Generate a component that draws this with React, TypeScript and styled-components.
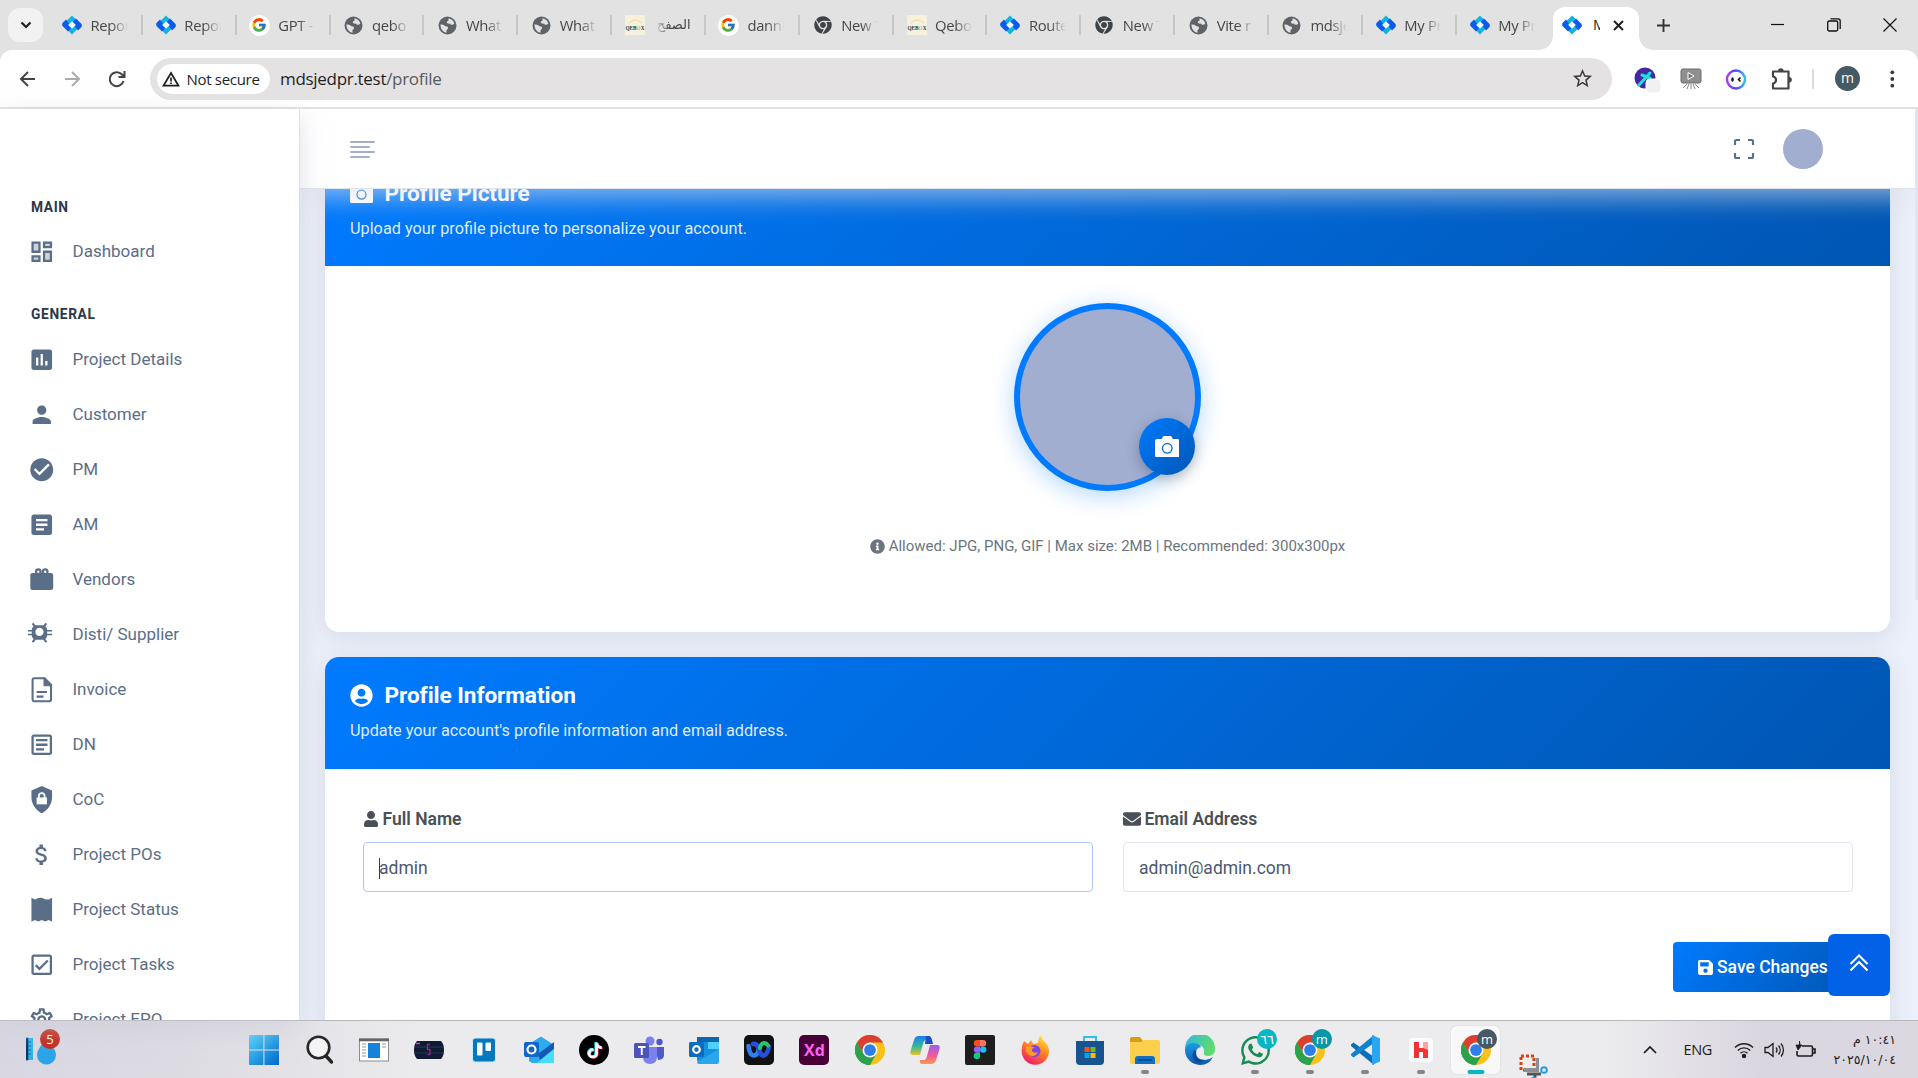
import React from "react";
import styled, { createGlobalStyle, css } from "styled-components";
import {
  MdPublic, MdAssessment, MdPerson, MdCheckCircle, MdArticle, MdOutlineArticle,
  MdAttachMoney, MdOutlineCheckBox, MdOutlineSettings, MdStarBorder,
} from "react-icons/md";
import { FaChrome, FaUserCircle, FaInfoCircle, FaUser, FaEnvelope, FaSave, FaTiktok, FaWhatsapp } from "react-icons/fa";
import { FcGoogle } from "react-icons/fc";

const Global = createGlobalStyle`
  *, *::before, *::after { box-sizing: border-box; }
  body { margin: 0; overflow: hidden; font-family: Roboto, "Liberation Sans", sans-serif; }
  svg { display: block; flex: none; }
  p, h2, h3 { margin: 0; }
`;

const uiFont = `"Open Sans", "Noto Sans", sans-serif`;

const Screen = styled.div`
  display: flex;
  flex-direction: column;
  width: 1918px;
  height: 1078px;
  overflow: hidden;
  background: #e2e2e2;
`;

/* ---------- browser chrome ---------- */

const TabStrip = styled.div`
  display: flex;
  align-items: center;
  height: 50px;
  flex: none;
  padding-left: 8px;
  background: #e2e2e2;
`;

const TabSearch = styled.div`
  display: grid;
  place-items: center;
  width: 35px;
  height: 34px;
  margin-right: 6px;
  border-radius: 12px;
  background: #f2f2f2;
`;

const TabItem = styled.div<{ $last?: boolean }>`
  display: flex;
  align-items: center;
  width: 93.85px;
  height: 20px;
  padding-left: 12px;
  gap: 7.5px;
  border-right: 2px solid ${(p) => (p.$last ? "transparent" : "#c6c6c6")};
`;

const Favicon = styled.div`
  display: grid;
  place-items: center;
  width: 22px;
  height: 22px;
  flex: none;
`;

const TabTitle = styled.div<{ $rtl?: boolean }>`
  width: 37px;
  overflow: hidden;
  white-space: nowrap;
  direction: ${(p) => (p.$rtl ? "rtl" : "ltr")};
  font: 14.8px/22px ${uiFont};
  ${(p) => p.$rtl && css`font-family: "DejaVu Sans", sans-serif; font-size: 13px;`}
  letter-spacing: -0.3px;
  color: #474747;
  mask-image: linear-gradient(to ${(p) => (p.$rtl ? "left" : "right")}, #000 55%, transparent 100%);
`;

const ActiveTab = styled.div`
  position: relative;
  display: flex;
  align-items: center;
  align-self: flex-end;
  width: 86px;
  height: 43px;
  margin-left: 2.5px;
  padding: 0 13px 7px 8px;
  border-radius: 12px 12px 0 0;
  background: #fff;
  &::before, &::after {
    content: "";
    position: absolute;
    bottom: 0;
    width: 14px;
    height: 14px;
  }
  &::before { left: -14px; background: radial-gradient(circle at 0 0, transparent 13.5px, #fff 14px); }
  &::after { right: -14px; background: radial-gradient(circle at 100% 0, transparent 13.5px, #fff 14px); }
`;

const ActiveTitle = styled.div`
  width: 7px;
  margin: 0 13px 0 10px;
  overflow: hidden;
  font: 14.5px/22px ${uiFont};
  color: #1f1f1f;
`;

const NewTab = styled.div`
  margin-left: 17px;
  flex: 1;
`;

const WindowButtons = styled.div`
  display: flex;
  width: 168.5px;
  flex: none;
  > svg { margin: 0 auto; }
`;

const Toolbar = styled.div`
  display: flex;
  align-items: center;
  height: 59px;
  flex: none;
  padding-left: 17px;
  border-radius: 12px 12px 0 0;
  border-bottom: 2px solid #e1e1e1;
  background: #fff;
`;

const NavButtons = styled.div`
  display: flex;
  gap: 22px;
  width: 133px;
`;

const Omnibox = styled.div`
  display: flex;
  align-items: center;
  width: 1462px;
  height: 42px;
  flex: none;
  padding: 0 18px 0 7px;
  border-radius: 21px;
  background: #e4e2e3;
`;

const SecurityChip = styled.div`
  display: flex;
  align-items: center;
  gap: 6.5px;
  width: 113px;
  height: 30px;
  padding-left: 5px;
  border-radius: 15px;
  background: #fff;
  font: 500 15px/20px ${uiFont};
  letter-spacing: -0.3px;
  color: #1f1f1f;
  white-space: nowrap;
`;

const Url = styled.div`
  flex: 1;
  margin-left: 10px;
  padding-top: 1px;
  font: 17px/24px ${uiFont};
  letter-spacing: -0.3px;
  color: #1f1f1f;
  span { color: #5a5a5a; }
`;

const Extensions = styled.div`
  display: flex;
  align-items: center;
  flex: 1;
  padding-left: 21px;
  gap: 21px;
`;

const ExtSlot = styled.div`
  display: grid;
  place-items: center;
  width: 24.5px;
`;

const ExtDivider = styled.div`
  width: 2px;
  height: 20px;
  margin: 0 0 0 -3px;
  background: #dcdcdc;
`;

const ProfileDot = styled.div`
  display: grid;
  place-items: center;
  width: 25px;
  height: 25px;
  border-radius: 50%;
  background: #455a64;
  color: #fff;
  font: 14px/20px ${uiFont};
  padding-bottom: 2px;
`;

/* ---------- application ---------- */

const Page = styled.div`
  display: flex;
  height: 911px;
  flex: none;
  background: #ecf0fa;
`;

const Sidebar = styled.aside`
  width: 300px;
  flex: none;
  overflow: hidden;
  padding-top: 87px;
  border-right: 1px solid #dfe1e8;
  background: #fff;
  box-shadow: 0 8px 24px rgba(200, 204, 215, 0.6);
  z-index: 2;
`;

const Section = styled.h3<{ $gap?: boolean }>`
  margin-top: ${(p) => (p.$gap ? "25px" : "0")};
  padding-left: 31px;
  font-size: 13.75px;
  font-weight: 700;
  line-height: 22px;
  letter-spacing: 0.65px;
  color: #2c364c;
`;

const NavItem = styled.a<{ $top?: number }>`
  display: flex;
  align-items: center;
  gap: 16.5px;
  height: 55px;
  margin-top: ${(p) => p.$top ?? 0}px;
  padding-left: 28px;
  font-size: 17px;
  color: #5b6e88;
  span { padding-top: 1px; }
`;

const NavIcon = styled.span`
  display: grid;
  place-items: center;
  width: 28px;
  height: 28px;
  color: #5b6e88;
`;

const Main = styled.main`
  position: relative;
  display: flex;
  flex-direction: column;
  width: 1615px;
  min-width: 0;
  overflow: hidden;
`;

const ScrollTrack = styled.div`
  width: 3px;
  height: 491px;
  background: #e1e6f3;
`;

const TopBar = styled.header`
  display: flex;
  align-items: center;
  justify-content: space-between;
  height: 80px;
  flex: none;
  padding: 0 92px 0 50px;
  border-bottom: 1px solid #dee4ec;
  background: #fff;
  box-shadow: 0 8px 24px rgba(222, 225, 232, 0.62);
  z-index: 1;
`;

const Burger = styled.div`
  display: flex;
  flex-direction: column;
  gap: 3px;
  padding-top: 2px;
  i { display: block; width: 25px; height: 2px; border-radius: 1px; background: #a5aecb; }
  i:nth-child(even) { width: 20px; }
`;

const TopActions = styled.div`
  display: flex;
  align-items: center;
  gap: 28px;
`;

const SmallAvatar = styled.div`
  width: 40px;
  height: 40px;
  border-radius: 50%;
  background: #a1aed0;
`;

const Content = styled.div`
  display: flex;
  flex-direction: column;
  gap: 25px;
  margin-top: -35px;
  padding: 0 25px;
`;

const Card = styled.section<{ $h: number }>`
  height: ${(p) => p.$h}px;
  flex: none;
  overflow: hidden;
  border-radius: 14px;
  background: #fff;
  box-shadow: 0 5px 25px rgba(60, 70, 110, 0.12);
`;

const CardHead = styled.div<{ $top?: number }>`
  height: 112px;
  padding: ${(p) => p.$top ?? 25}px 25px 0;
  background: linear-gradient(135deg, #007bff 0%, #0056b3 100%);
  color: #fff;
`;

const CardTitle = styled.h2`
  display: flex;
  align-items: center;
  gap: 11.5px;
  height: 26px;
  font-size: 22.6px;
  font-weight: 700;
  letter-spacing: -0.05px;
`;

const CardSub = styled.p`
  margin-top: 11px;
  font-size: 16.25px;
  line-height: 24px;
  color: rgba(255, 255, 255, 0.88);
`;

const PictureBody = styled.div`
  display: flex;
  flex-direction: column;
  align-items: center;
  padding-top: 37px;
`;

const Portrait = styled.div`
  position: relative;
  width: 187px;
  height: 188px;
  border: 6px solid #007bff;
  border-radius: 50%;
  background: #a1aed0;
  box-shadow: 0 5px 25px rgba(0, 123, 255, 0.3);
`;

const CameraButton = styled.div`
  position: absolute;
  right: 0;
  bottom: 10px;
  display: grid;
  place-items: center;
  width: 56px;
  height: 57px;
  border-radius: 50%;
  background: linear-gradient(135deg, #007bff, #0056b3);
  box-shadow: 0 4px 14px rgba(0, 0, 0, 0.25);
  color: #fff;
`;

const Hint = styled.p`
  display: flex;
  align-items: center;
  gap: 4px;
  margin-top: 43px;
  font-size: 15px;
  line-height: 24px;
  color: #6c757d;
`;

const Fields = styled.div`
  display: grid;
  grid-template-columns: 1fr 1fr;
  gap: 30px;
  padding: 35px 37px 0 38px;
`;

const Label = styled.div`
  display: flex;
  align-items: center;
  gap: 3.5px;
  height: 29px;
  margin-bottom: 9px;
  padding-top: 1px;
  font-size: 17.5px;
  font-weight: 600;
  color: #495057;
  svg { margin-bottom: 1px; }
`;

const Input = styled.div<{ $focus?: boolean }>`
  display: flex;
  align-items: center;
  height: 50px;
  padding: 2px 0 0 15px;
  border: 1px solid ${(p) => (p.$focus ? "#b3c6f9" : "#e1e5f1")};
  border-radius: 4px;
  font-size: 17.5px;
  color: #4d5875;
`;

const Caret = styled.i`
  width: 1px;
  height: 21px;
  margin-right: -1px;
  background: #333b55;
`;

const FormFoot = styled.div`
  display: flex;
  justify-content: flex-end;
  padding: 50px 37px 0 0;
`;

const SaveButton = styled.div`
  display: flex;
  align-items: center;
  gap: 3px;
  width: 180px;
  height: 50px;
  padding-left: 24px;
  border-radius: 4px;
  background: linear-gradient(135deg, #007bff, #0056b3);
  color: #fff;
  font-size: 17.5px;
  font-weight: 500;
  white-space: nowrap;
`;

const BackToTop = styled.div`
  position: absolute;
  right: 25px;
  bottom: 24px;
  display: grid;
  place-items: center;
  width: 62px;
  height: 62px;
  padding-bottom: 4px;
  border-radius: 6px;
  background: #0162e8;
`;

/* ---------- taskbar ---------- */

const Taskbar = styled.div`
  display: flex;
  height: 58px;
  flex: none;
  border-top: 1px solid #b8b8bb;
  background: linear-gradient(90deg, #d9d7e1 0, #dddbe2 180px, #ebebed 420px, #ececee 1600px, #dad6e0 1760px, #dcd8e0 100%);
`;

const Weather = styled.div`
  position: relative;
  width: 236px;
  padding: 8px 0 0 26px;
`;

const Badge = styled.div<{ $x: number; $y: number; $s: number; $bg: string }>`
  position: absolute;
  left: ${(p) => p.$x}px;
  top: ${(p) => p.$y}px;
  display: grid;
  place-items: center;
  width: ${(p) => p.$s}px;
  height: ${(p) => p.$s}px;
  border-radius: 50%;
  background: ${(p) => p.$bg};
  color: #fff;
  font: 13px/16px ${uiFont};
`;

const AppSlot = styled.div<{ $active?: boolean; $running?: boolean; $drop?: boolean }>`
  position: relative;
  display: grid;
  place-items: center;
  width: 49px;
  height: 48px;
  margin: 5px 3.05px 0;
  padding-top: ${(p) => (p.$drop ? "27px" : "0")};
  padding-left: ${(p) => (p.$drop ? "6px" : "0")};
  border-radius: 5px;
  ${(p) => p.$active && css`background: #f8f8f9; box-shadow: 0 0 1px rgba(0, 0, 0, 0.25);`}
  &::after {
    content: "";
    position: absolute;
    bottom: 0;
    left: 50%;
    width: ${(p) => (p.$active ? 17 : 8)}px;
    height: 4px;
    transform: translateX(-50%);
    border-radius: 2px;
    background: ${(p) => (p.$active ? "#06b6c4" : p.$running ? "#858585" : "transparent")};
  }
`;

const Tile = styled.div<{ $bg: string; $fg?: string; $r?: number }>`
  display: grid;
  place-items: center;
  width: 30px;
  height: 30px;
  border-radius: ${(p) => p.$r ?? 5}px;
  background: ${(p) => p.$bg};
  color: ${(p) => p.$fg ?? "#fff"};
  font: 700 16px/20px "Open Sans", sans-serif;
`;

const Tray = styled.div`
  display: flex;
  align-items: center;
  flex: 1;
  padding-right: 22px;
  justify-content: flex-end;
  color: #1c1c1c;
`;

const Lang = styled.div`
  margin: 0 22px 0 26px;
  padding-top: 1px;
  font: 14.5px/20px ${uiFont};
  letter-spacing: -0.3px;
`;

const TrayIcons = styled.div`
  display: flex;
  gap: 10px;
  margin-right: 18px;
`;

const Clock = styled.div`
  direction: rtl;
  width: 62px;
  font: 12.6px/20px "DejaVu Sans", sans-serif;
  letter-spacing: -1px;
  white-space: nowrap;
`;

/* ---------- drawings ---------- */

const Camera = ({ size }: { size: number }) => (
  <svg width={size} height={size * 0.88} viewBox="0 0 24 21">
    <path fill="currentColor" d="M2 3h4.500l1-2q.5-1 1.500-1h6q1 0 1.500 1l1 2H22q2 0 2 2v14q0 2-2 2H2q-2 0-2-2V5q0-2 2-2z" />
    <circle cx="12" cy="12" r="4.700" fill="none" stroke="#0a72e6" strokeWidth="1.400" />
  </svg>
);

const Diamond = () => (
  <svg width="20" height="20" viewBox="0 0 20 20">
    <path d="M10 0.5 L19.5 10 L10 19.5 L0.5 10Z" fill="#10b4e0" />
    <path d="M10 6.5 L14 2.5 L19.5 8 Q20.2 10 19.5 11 L16 14.5Z" fill="#0a5cf0" transform="translate(0 1)" />
    <path d="M10 13.5 L6 17.5 L0.5 12 Q-.2 10 .5 9 L4 5.5Z" fill="#0a5cf0" transform="translate(0 -1)" />
    <path d="M10 6.2 L13.8 10 L10 13.8 L6.2 10Z" fill="#f5f8fb" />
  </svg>
);

const Qebox = () => (
  <svg width="20" height="20" viewBox="0 0 20 20">
    <rect width="20" height="20" fill="#f6f1dc" />
    <path d="M4 8 Q10 2 17 8" stroke="#f3d59b" fill="none" />
    <text x="0.5" y="14.5" fontSize="7" fontWeight="700" textLength="19" lengthAdjust="spacingAndGlyphs" fontFamily="Liberation Serif, serif" fill="#17423d">QEB<tspan fill="#e0aa4f">O</tspan>X</text>
  </svg>
);

const GoogleIcon = () => (
  <svg width="21" height="21" viewBox="0 0 21 21">
    <circle cx="10.5" cy="10.5" r="10.5" fill="#fff" />
    <FcGoogle x="2" y="2" width="17" height="17" />
  </svg>
);

/* Dark globe disc with light land masses */
const Globe = () => (
  <svg width="19" height="19" viewBox="0 0 19 19">
    <circle cx="9.500" cy="9.500" r="9" fill="#5f6368" />
    <path d="M2.300 8.500q2.700-.3 4.200 1 .8 1 2.500 1 1.500.4 1 2-.8 1.200-1.500 1.500v2.700Q3 16 2.300 8.500z" fill="#e2e2e2" />
    <path d="M10.500 2.200q4.500.8 5.800 5.300-.8 1.500-2.300 1-1.500.7-1.800-1-2.700.5-3.500-1 .2-1.500 1.800-1.800z" fill="#e2e2e2" />
  </svg>
);

const ChromeLogo = () => (
  <svg width="30" height="30" viewBox="0 0 48 48">
    <circle cx="24" cy="24" r="24" fill="#fbc116" />
    <path d="M24 24 L3.2 12 A24 24 0 0 1 44.8 12 L24 12Z" fill="#dc3e30" />
    <path d="M3.2 12 A24 24 0 0 0 24 48 L34.4 30 L24 24 L13.6 30Z" fill="#2ba24c" />
    <path d="M3.2 12 L13.6 30 L24 24 L24 12Z" fill="#dc3e30" />
    <path d="M3.2 12 L13.6 30 L20 33 L24 48 A24 24 0 0 1 3.2 12Z" fill="#2ba24c" />
    <circle cx="24" cy="24" r="12" fill="#fff" />
    <circle cx="24" cy="24" r="9.4" fill="#2f7de9" />
  </svg>
);

const PuzzleIcon = () => (
  <svg width="24" height="26" viewBox="0 0 24 26">
    <path d="M3 5.500h15.500v17H3v-5q3-.5 3-3.500t-3-3.500z" fill="none" stroke="#444" strokeWidth="2.200" strokeLinejoin="round" />
    <path d="M8 5a2.800 2.800 0 0 1 5.600 0zM19 11a2.800 2.800 0 0 1 0 5.600z" fill="#444" />
  </svg>
);

const faviconFor: Record<string, React.ReactNode> = {
  diamond: <Diamond />,
  google: <GoogleIcon />,
  globe: <Globe />,
  chrome: <FaChrome size={18} color="#3f4347" />,
  qebox: <Qebox />,
};

const tabs: [string, string][] = [
  ["diamond", "Repor"], ["diamond", "Repor"], ["google", "GPT -"], ["globe", "qebo"], ["globe", "What"],
  ["globe", "What"], ["qebox", "الصفح"], ["google", "danni"], ["chrome", "New T"], ["qebox", "Qebo"],
  ["diamond", "Route"], ["chrome", "New T"], ["globe", "Vite r"], ["globe", "mdsje"], ["diamond", "My Pr"], ["diamond", "My Pr"],
];

const DashboardIcon = () => (
  <svg width="27.5" height="27.5" viewBox="0 0 24 24" fill="#cdd4dc" stroke="currentColor" strokeWidth="2">
    <path d="M4 4h6v8H4zM14 4h6v4h-6zM14 12h6v8h-6zM4 16h6v4H4z" />
  </svg>
);
const GiftIcon = () => (
  <svg width="27.5" height="27.5" viewBox="0 0 24 24" fill="currentColor">
    <path d="M4 6h16q2 0 2 2v11q0 2-2 2H4q-2 0-2-2V8q0-2 2-2z" />
    <circle cx="9" cy="5" r="2" fill="none" stroke="currentColor" strokeWidth="1.9" />
    <circle cx="15" cy="5" r="2" fill="none" stroke="currentColor" strokeWidth="1.9" />
  </svg>
);
const SupplierIcon = () => (
  <svg width="27.5" height="27.5" viewBox="0 0 24 24" fill="none" stroke="currentColor">
    <path d="M-1 8.500h22M-1 11.700h22" strokeWidth="1.300" />
    <path d="M4 2l3 4M16 2l-3 4M4 18.500l3-4M16 18.500l-3-4" strokeWidth="1.800" />
    <rect x="3.300" y="3.800" width="13.400" height="12.600" rx="4" fill="currentColor" stroke="none" />
    <circle cx="10" cy="9.500" r="3.600" fill="#fff" stroke="none" />
  </svg>
);
const InvoiceIcon = () => (
  <svg width="27.5" height="27.5" viewBox="0 0 24 24" fill="none" stroke="currentColor" strokeWidth="1.800">
    <path d="M5.500 1.900h9l5.600 5.600v13a1.500 1.500 0 0 1-1.500 1.500H5.500A1.500 1.500 0 0 1 4 20.500V3.400A1.500 1.500 0 0 1 5.500 1.900z" />
    <path d="M14 2v6.500h6z" fill="currentColor" strokeWidth="1" />
    <path d="M7.500 14h9M7.500 18h6" />
  </svg>
);
const ShieldIcon = () => (
  <svg width="27.5" height="27.5" viewBox="0 0 24 24">
    <path fill="currentColor" d="M12 0 21 4v6c0 5.600-3.800 11-9 14-5.200-3-9-8.400-9-14V4z" />
    <path fill="#fff" d="M7.500 10h9v6h-9z" />
    <path fill="none" stroke="#fff" strokeWidth="1.500" d="M9.500 10.500V8.700a2.500 2.500 0 0 1 5 0v1.800" />
  </svg>
);
const ReceiptIcon = () => (
  <svg width="27.5" height="27.5" viewBox="0 0 24 24" fill="currentColor">
    <path d="M3 1.500 6 3l3-1.300L12 1.500l3 1.300L18 3l3-1.500v21L18 21l-3 1.300L12 21l-3 1.300L6 21l-3 1.500z" />
  </svg>
);

const nav: [React.ReactNode, string][] = [
  [<MdAssessment size={27.5} />, "Project Details"],
  [<MdPerson size={27.5} />, "Customer"],
  [<MdCheckCircle size={27.5} />, "PM"],
  [<MdArticle size={27.5} />, "AM"],
  [<GiftIcon />, "Vendors"],
  [<SupplierIcon />, "Disti/ Supplier"],
  [<InvoiceIcon />, "Invoice"],
  [<MdOutlineArticle size={27.5} />, "DN"],
  [<ShieldIcon />, "CoC"],
  [<MdAttachMoney size={27.5} />, "Project POs"],
  [<ReceiptIcon />, "Project Status"],
  [<MdOutlineCheckBox size={27.5} />, "Project Tasks"],
  [<MdOutlineSettings size={27.5} />, "Project EPO"],
];

const S = ({ children }: { children: React.ReactNode }) => (
  <svg width="30" height="30" viewBox="0 0 30 30">{children}</svg>
);

const WindowsLogo = () => (
  <S>
    <defs><linearGradient id="win" x1="0" y1="0" x2="1" y2="1"><stop offset="0" stopColor="#4fd2fb" /><stop offset="1" stopColor="#0069c9" /></linearGradient></defs>
    <path fill="url(#win)" d="M0 0h14.400v14.400H0zM15.400 0H30v14.400H15.400zM0 15.400h14.400V30H0zM15.400 15.400H30V30H15.400z" />
  </S>
);
const SearchLogo = () => (
  <S><circle cx="14.500" cy="12.500" r="10.800" fill="#f4f4f5" stroke="#262626" strokeWidth="2.600" /><path d="M22 21l5.500 6" stroke="#262626" strokeWidth="3.400" strokeLinecap="round" /></S>
);
const DocWindow = () => (
  <S>
    <rect x=".5" y="4" width="29" height="22" fill="#fff" stroke="#8b8b8b" /><rect x="0" y="3.500" width="30" height="2.800" fill="#666" />
    <rect x="9" y="8" width="12" height="15" fill="#1681d8" />
    <path d="M3 9h4M3 12h4M3 15h4M3 18h4M3 21h4M23 9h4M23 12h4" stroke="#999" />
  </S>
);
const DarkGame = () => (
  <S><path d="M3 6h24q3 3 3 9t-3 9H3q-3-3-3-9t3-9z" fill="#101a33" /><path d="M1 12h28M1 18h28" stroke="#1d3f58" /><path d="M16 9.500h-2.500v5H16v5h-2.500" stroke="#8e2b80" fill="none" strokeWidth="1.300" /><path d="M2 8.500h4" stroke="#d04a9b" strokeWidth="1.500" /></S>
);
const Trello = () => (
  <S><rect x="3.500" y="3" width="23" height="24" rx="3" fill="#0479c2" stroke="#c8ebfb" /><rect x="8" y="7.500" width="5.500" height="13" rx="1" fill="#fff" /><rect x="16.500" y="7.500" width="5.500" height="8.500" rx="1" fill="#fff" /></S>
);
const OutlookNew = () => (
  <S>
    <path d="M5 9 17 1.500 30 10v16q0 2-2 2H9q-2 0-4-2z" fill="#2babf0" /><path d="M14 19 30 7v7L16 25z" fill="#1459b5" /><path d="M13 28 30 14v12q0 2-2 2z" fill="#4bdcfb" />
    <rect x="0" y="7" width="15" height="15" rx="2" fill="#1065cc" /><circle cx="7.500" cy="14.500" r="4" fill="none" stroke="#fff" strokeWidth="2.200" />
  </S>
);
const TikTok = () => (
  <S><circle cx="15" cy="15" r="15" fill="#000" /><FaTiktok x="7" y="7" width="15" height="16" color="#25f4ee" /><FaTiktok x="8.500" y="8" width="15" height="16" color="#fe2c55" /><FaTiktok x="7.800" y="7.500" width="15" height="16" color="#fff" /></S>
);
const Teams = () => (
  <S>
    <circle cx="25.500" cy="7" r="3.200" fill="#5059c9" /><path d="M21 12h9v9q-1 4-6 4z" fill="#5059c9" /><circle cx="16" cy="6" r="4.500" fill="#7b83eb" /><path d="M9 12h14v10q0 7-7 7t-7-7z" fill="#7b83eb" />
    <rect x="0" y="8" width="15" height="15" rx="1.500" fill="#4b53bc" /><path d="M4 12h7.500M7.750 12v8" stroke="#fff" strokeWidth="1.900" />
  </S>
);
const Outlook = () => (
  <S>
    <rect x="8" y="2" width="22" height="25" rx="2" fill="#1490df" /><path d="M8 2h22v5H8z" fill="#0f65b0" /><path d="M19 7h11v7H19z" fill="#50d0ff" /><path d="M8 27l22-13v13q0 2-2 2H10q-2 0-2-2z" fill="#28a8ea" />
    <rect x="0" y="7" width="15" height="15" rx="1.500" fill="#0f6cbd" /><circle cx="7.500" cy="14.500" r="3.300" fill="none" stroke="#fff" strokeWidth="2.200" />
  </S>
);
const Webex = () => (
  <S>
    <rect width="30" height="30" rx="5" fill="#121212" />
    <path d="M4.500 11q1 9.500 5.500 9.500 3.500 0 5-7" fill="none" stroke="#2c7ff5" strokeWidth="4.500" strokeLinecap="round" />
    <path d="M9 9q4-1 6 5.500 2 7 5 6 4-2 5-9" fill="none" stroke="#2450dd" strokeWidth="4.500" strokeLinecap="round" />
    <path d="M16 13q1-5 4-5 2.500 0 4 2.500" fill="none" stroke="#27c46b" strokeWidth="4" strokeLinecap="round" />
  </S>
);
const Copilot = () => (
  <S>
    <defs>
      <linearGradient id="cpa" x1="0" y1="0" x2="0" y2="1"><stop offset="0" stopColor="#1a7ff0" /><stop offset=".55" stopColor="#37b89a" /><stop offset="1" stopColor="#e9c32c" /></linearGradient>
      <linearGradient id="cpb" x1="0" y1="0" x2="0" y2="1"><stop offset="0" stopColor="#a05af0" /><stop offset=".55" stopColor="#ee5a9a" /><stop offset="1" stopColor="#fb9a4b" /></linearGradient>
    </defs>
    <path d="M9 1h9q3 0 2 4h-4q-2 0-3 4l-3 11H3q-3.500 0-2.500-4L4 5q1-4 5-4z" fill="url(#cpa)" /><path d="M16 1h3q2 0 3 4l1 4h-8z" fill="#1d4fc8" />
    <path d="M21 29h-9q-3 0-2-4h4q2 0 3-4l3-11h7q3.500 0 2.500 4L26 25q-1 4-5 4z" fill="url(#cpb)" />
  </S>
);
const Figma = () => (
  <S>
    <rect width="30" height="30" rx="2" fill="#1e1e1e" /><path d="M15 5h-3a3.200 3.200 0 0 0 0 6.400h3z" fill="#f24e1e" /><path d="M15 5h3a3.200 3.200 0 0 1 0 6.400h-3z" fill="#ff7262" /><path d="M15 11.400h-3a3.200 3.200 0 0 0 0 6.400h3z" fill="#a259ff" /><circle cx="18.200" cy="14.600" r="3.200" fill="#1abcfe" /><path d="M15 17.800h-3a3.200 3.200 0 1 0 3 3.200z" fill="#0acf83" />
  </S>
);
const Firefox = () => (
  <S>
    <defs><linearGradient id="ff" x1=".8" y1="0" x2=".3" y2="1"><stop offset="0" stopColor="#fff04a" /><stop offset=".45" stopColor="#ff8a20" /><stop offset="1" stopColor="#f2186a" /></linearGradient></defs>
    <path d="M4 6l4 3 3-4 2 4 5-1q0-5 3-8 1 5 4 7 4 4 4 9a13.700 13.700 0 0 1-27.400 0q0-6 2.400-10z" fill="url(#ff)" /><circle cx="14.500" cy="16" r="6" fill="#7b46e4" /><path d="M6 12q5-2 9 1-4 0-3 3 2 3 6 1-3 6-9 3-4-3-3-8z" fill="#ff9a22" />
  </S>
);
const Store = () => (
  <S>
    <path d="M9 6V2h12v4" fill="none" stroke="#35bdf2" strokeWidth="2" /><path d="M1 6h28v20q0 4-4 4H5q-4 0-4-4z" fill="#17538f" /><path d="M9.500 12h5v5h-5z" fill="#f25022" /><path d="M15.500 12h5v5h-5z" fill="#7fba00" /><path d="M9.500 18h5v5h-5z" fill="#00a4ef" /><path d="M15.500 18h5v5h-5z" fill="#ffb900" />
  </S>
);
const Folder = () => (
  <S>
    <path d="M0 4q0-2 2-2h8l3 4h15v6H0z" fill="#dc9c10" /><path d="M0 7h11l3-2h14q2 0 2 2v20q0 2-2 2H2q-2 0-2-2z" fill="#fccf4c" /><path d="M5 29v-5q0-3 3-3h14q3 0 3 3v5z" fill="#1170c4" /><path d="M8 25h14" stroke="#0a4a8a" strokeWidth="1.500" />
  </S>
);
const Edge = () => (
  <S>
    <defs>
      <linearGradient id="eg1" x1="0" y1="0" x2="1" y2=".3"><stop offset="0" stopColor="#2fb4ea" /><stop offset="1" stopColor="#5ddc6c" /></linearGradient>
      <linearGradient id="eg2" x1="0" y1="0" x2="0" y2="1"><stop offset="0" stopColor="#1c9de4" /><stop offset="1" stopColor="#0c58ad" /></linearGradient>
    </defs>
    <path d="M0 13A15 15 0 0 1 30 14q0 6-6 7-6 0-5-3 1-8-7-8Q4 10 0 17z" fill="url(#eg1)" /><path d="M0 15q1-7 8-7 6 0 8 4-5 1-5 6 0 7 9 7 4 0 8-3-4 8-13 8A15 15 0 0 1 0 15z" fill="url(#eg2)" /><path d="M11 16q-1 9 8 9-4 4-8 2-6-4-2-12z" fill="#0b4b99" />
  </S>
);
const VsCode = () => (
  <S>
    <path d="M1 9.500 3.500 7.500 24 22v8L1 11z" fill="#0a6fb8" /><path d="M1 20.500 3.500 22.500 24 8V0L1 19z" fill="#1180cf" /><path d="M22 0 30 3.500v23L22 30z" fill="#2aa7f2" />
  </S>
);
const Herd = () => (
  <S><rect x="3" y="3" width="24" height="24" rx="4" fill="#fbfbfb" /><path d="M8 7h5v6h4V7h5v16h-5v-6h-4v6H8z" fill="#f23333" /><path d="M17 7h5v8l-5-2z" fill="#f9a5a5" /></S>
);
const Snip = () => (
  <S><rect x="2" y="3" width="13" height="14" fill="#eee" stroke="#d8420f" strokeWidth="3" strokeDasharray="3 2" /><path d="M5 15h12V5h3v14H5z" fill="#8c8f94" /><path d="M8 21h14M16 20v4" stroke="#555" strokeWidth="3" /><circle cx="25" cy="17" r="2.800" fill="none" stroke="#1f9ce4" strokeWidth="1.900" /><circle cx="15" cy="27" r="2.400" fill="none" stroke="#1f9ce4" strokeWidth="1.900" /></S>
);

type AppDef = { icon: React.ReactNode; running?: boolean; active?: boolean; drop?: boolean; badge?: [string, string] };
const apps: AppDef[] = [
  { icon: <WindowsLogo /> }, { icon: <SearchLogo /> }, { icon: <DocWindow /> }, { icon: <DarkGame /> }, { icon: <Trello /> },
  { icon: <OutlookNew /> }, { icon: <TikTok /> }, { icon: <Teams /> }, { icon: <Outlook /> }, { icon: <Webex /> },
  { icon: <Tile $bg="#470137" $fg="#ff61f6">Xd</Tile> }, { icon: <ChromeLogo /> }, { icon: <Copilot /> }, { icon: <Figma /> },
  { icon: <Firefox /> }, { icon: <Store /> }, { icon: <Folder />, running: true }, { icon: <Edge /> },
  { icon: <FaWhatsapp size={33} color="#1a8a55" />, running: true, badge: ["٦٦", "#06b6c4"] },
  { icon: <ChromeLogo />, running: true, badge: ["m", "#0797a7"] },
  { icon: <VsCode />, running: true }, { icon: <Herd />, running: true },
  { icon: <ChromeLogo />, active: true, badge: ["m", "#455a64"] },
  { icon: <Snip />, drop: true },
];

const line = { fill: "none", stroke: "#444", strokeWidth: 2 } as const;

export default function App() {
  return (
    <Screen>
      <Global />
      <TabStrip>
        <TabSearch>
          <svg width="12" height="8" viewBox="0 0 12 8"><path d="M1.500 1.500 6 6l4.500-4.500" fill="none" stroke="#1f1f1f" strokeWidth="2.200" /></svg>
        </TabSearch>
        {tabs.map(([icon, title], i) => (
          <TabItem key={i} $last={i === tabs.length - 1}>
            <Favicon>{faviconFor[icon]}</Favicon>
            <TabTitle $rtl={title.startsWith("ا")}>{title}</TabTitle>
          </TabItem>
        ))}
        <ActiveTab>
          <Favicon><Diamond /></Favicon>
          <ActiveTitle>M</ActiveTitle>
          <svg width="11" height="11" viewBox="0 0 11 11"><path d="M1 1l9 9M10 1l-9 9" stroke="#1f1f1f" strokeWidth="2" /></svg>
        </ActiveTab>
        <NewTab><svg width="15" height="15" viewBox="0 0 15 15"><path d="M7.500 1v13M1 7.500h13" stroke="#333" strokeWidth="1.900" /></svg></NewTab>
        <WindowButtons>
          <svg width="14" height="14" viewBox="0 0 14 14"><path d="M0 6.500h13" stroke="#111" strokeWidth="1.200" /></svg>
          <svg width="14" height="14" viewBox="0 0 14 14" fill="none" stroke="#111" strokeWidth="1.300"><rect x=".7" y="3" width="10" height="10" rx="1.500" /><path d="M3.500 .8h7.500q2.200 0 2.200 2.200v8" /></svg>
          <svg width="14" height="14" viewBox="0 0 14 14"><path d="M.5 .5l13 13M13.500 .5l-13 13" stroke="#111" strokeWidth="1.200" /></svg>
        </WindowButtons>
      </TabStrip>

      <Toolbar>
        <NavButtons>
          <svg width="22" height="22" viewBox="0 0 22 22" {...line}><path d="M18 11H4M11 4l-7 7 7 7" /></svg>
          <svg width="22" height="22" viewBox="0 0 22 22" {...line} stroke="#ababab"><path d="M4 11h14M11 4l7 7-7 7" /></svg>
          <svg width="24" height="22" viewBox="0 0 24 22" {...line}><path d="M18.500 13a7 7 0 1 1-1.500-6.500l2 2M19.500 3v6h-6" /></svg>
        </NavButtons>
        <Omnibox>
          <SecurityChip>
            <svg width="18" height="16" viewBox="0 0 18 16" fill="none" stroke="#1f1f1f" strokeWidth="1.700"><path d="M9 2 16.500 14.700H1.500zM9 6.500v4M9 11.500v1.600" /></svg>
            Not secure
          </SecurityChip>
          <Url>mdsjedpr.test<span>/profile</span></Url>
          <MdStarBorder size={23} color="#3c3c3c" />
        </Omnibox>
        <Extensions>
          <ExtSlot>
            <svg width="28" height="28" viewBox="0 0 28 28"><circle cx="12" cy="13" r="10.500" fill="#4527a5" /><path d="M6 20 17 8M9 10l8 3" stroke="#1fe0d8" strokeWidth="3" strokeLinecap="round" /><rect x="13" y="14" width="15" height="14" rx="4" fill="#f1f1f1" stroke="#fff" /></svg>
          </ExtSlot>
          <ExtSlot>
            <svg width="22" height="22" viewBox="0 0 22 22"><rect x="1" y="1" width="20" height="14" rx="2" fill="#8f8f8f" stroke="#6d6d6d" /><path d="M8 4.500l6 3.500-6 3.500z" fill="#777" stroke="#fff" /><path d="M11 16v5M7 16l-4 4M15 16l4 4M9 16l-2 5M13 16l2 5" stroke="#888" /></svg>
          </ExtSlot>
          <ExtSlot>
            <svg width="22" height="22" viewBox="0 0 22 22"><defs><linearGradient id="face"><stop offset="0" stopColor="#a63df2" /><stop offset=".5" stopColor="#4b4bf5" /><stop offset="1" stopColor="#35b8f0" /></linearGradient></defs><circle cx="11" cy="11.500" r="9" fill="#fff" stroke="url(#face)" strokeWidth="2.400" /><ellipse cx="7.500" cy="11.500" rx="1.300" ry="2.300" fill="#111" /><path d="M15.500 9.500 13.500 11.500l2 2" stroke="#111" strokeWidth="1.600" fill="none" /></svg>
          </ExtSlot>
          <ExtSlot><PuzzleIcon /></ExtSlot>
          <ExtDivider />
          <ProfileDot>m</ProfileDot>
          <svg width="28" height="20" viewBox="0 0 28 20" fill="#3c3c3c"><circle cx="11.300" cy="3.300" r="1.900" /><circle cx="11.300" cy="10" r="1.900" /><circle cx="11.300" cy="16.700" r="1.900" /></svg>
        </Extensions>
      </Toolbar>

      <Page>
        <Sidebar>
          <Section>MAIN</Section>
          <NavItem $top={5}><NavIcon><DashboardIcon /></NavIcon><span>Dashboard</span></NavItem>
          <Section $gap>GENERAL</Section>
          {nav.map(([icon, label], i) => (
            <NavItem key={label} $top={i === 0 ? 6 : 0}><NavIcon>{icon}</NavIcon><span>{label}</span></NavItem>
          ))}
        </Sidebar>

        <Main>
          <TopBar>
            <Burger><i /><i /><i /><i /></Burger>
            <TopActions>
              <svg width="22" height="22" viewBox="0 0 22 22" fill="none" stroke="#5b6e88" strokeWidth="2.200"><path d="M2 7V3.500Q2 2 3.500 2H7M15 2h3.500Q20 2 20 3.500V7M20 15v3.500q0 1.500-1.500 1.500H15M7 20H3.500Q2 20 2 18.500V15" /></svg>
              <SmallAvatar />
            </TopActions>
          </TopBar>
          <Content>
            <Card $h={478}>
              <CardHead $top={26}>
                <CardTitle><Camera size={23} />Profile Picture</CardTitle>
                <CardSub>Upload your profile picture to personalize your account.</CardSub>
              </CardHead>
              <PictureBody>
                <Portrait><CameraButton><Camera size={24.5} /></CameraButton></Portrait>
                <Hint><FaInfoCircle size={15} />Allowed: JPG, PNG, GIF | Max size: 2MB | Recommended: 300x300px</Hint>
              </PictureBody>
            </Card>
            <Card $h={480}>
              <CardHead>
                <CardTitle><FaUserCircle size={23} />Profile Information</CardTitle>
                <CardSub>Update your account's profile information and email address.</CardSub>
              </CardHead>
              <Fields>
                <div>
                  <Label><FaUser size={16} />Full Name</Label>
                  <Input $focus><Caret />admin</Input>
                </div>
                <div>
                  <Label><FaEnvelope size={18} />Email Address</Label>
                  <Input>admin@admin.com</Input>
                </div>
              </Fields>
              <FormFoot><SaveButton><FaSave size={17} />Save Changes</SaveButton></FormFoot>
            </Card>
          </Content>
          <BackToTop>
            <svg width="20" height="18" viewBox="0 0 20 18" fill="none" stroke="#fff" strokeWidth="2"><path d="M1.500 10 10 1.500l8.500 8.500M1.500 16.500 10 8l8.500 8.500" /></svg>
          </BackToTop>
        </Main>
        <ScrollTrack />
      </Page>

      <Taskbar>
        <Weather>
          <svg width="32" height="36" viewBox="0 0 32 36"><rect x="0" y="9" width="7" height="22" fill="#2fb3ea" /><path d="M0 9h2v22H0zM2 13h3M2 17h3M2 21h3M2 25h3" stroke="#0b70b5" /><path d="M20.500 10q9.500 10 9.500 16a9.500 9.500 0 0 1-19 0q0-6 9.500-16z" fill="#2aa5e8" /></svg>
          <Badge $x={40} $y={8} $s={20} $bg="#c42b1c">5</Badge>
        </Weather>
        {apps.map((a, i) => (
          <AppSlot key={i} $active={a.active} $running={a.running} $drop={a.drop}>
            {a.icon}
            {a.badge && <Badge $x={26} $y={3} $s={20} $bg={a.badge[1]}>{a.badge[0]}</Badge>}
          </AppSlot>
        ))}
        <Tray>
          <svg width="14" height="9" viewBox="0 0 14 9"><path d="M1 8l6-6 6 6" fill="none" stroke="#1c1c1c" strokeWidth="1.700" /></svg>
          <Lang>ENG</Lang>
          <TrayIcons>
            <svg width="20" height="18" viewBox="0 0 20 18" fill="none" stroke="#1c1c1c" strokeWidth="1.400"><path d="M1 6.500a12.700 12.700 0 0 1 18 0M3.800 9.500a8.700 8.700 0 0 1 12.400 0M6.500 12.300a5 5 0 0 1 7 0" /><circle cx="10" cy="15" r="1.500" fill="#1c1c1c" /></svg>
            <svg width="21" height="18" viewBox="0 0 21 18" fill="none" stroke="#1c1c1c" strokeWidth="1.300"><path d="M1 6.500h3L9 2.500v13L4 11.500H1zM12 6.500a4 4 0 0 1 0 5M14.500 4.500a7 7 0 0 1 0 9M17 2.500a10 10 0 0 1 0 13" /></svg>
            <svg width="21" height="18" viewBox="0 0 21 18" fill="none" stroke="#1c1c1c" strokeWidth="1.600"><path d="M7 5h9q1.500 0 1.500 1.500v7q0 1.500-1.500 1.500H3.500Q2 15 2 13.500V10M18 8h2v4h-2" /><path d="M4.500 0v4H1l2 5 4-5H5z" fill="#1c1c1c" strokeWidth=".8" /></svg>
          </TrayIcons>
          <Clock><div>١٠:٤١ م</div><div>٢٠٢٥/١٠/٠٤</div></Clock>
        </Tray>
      </Taskbar>
    </Screen>
  );
}
